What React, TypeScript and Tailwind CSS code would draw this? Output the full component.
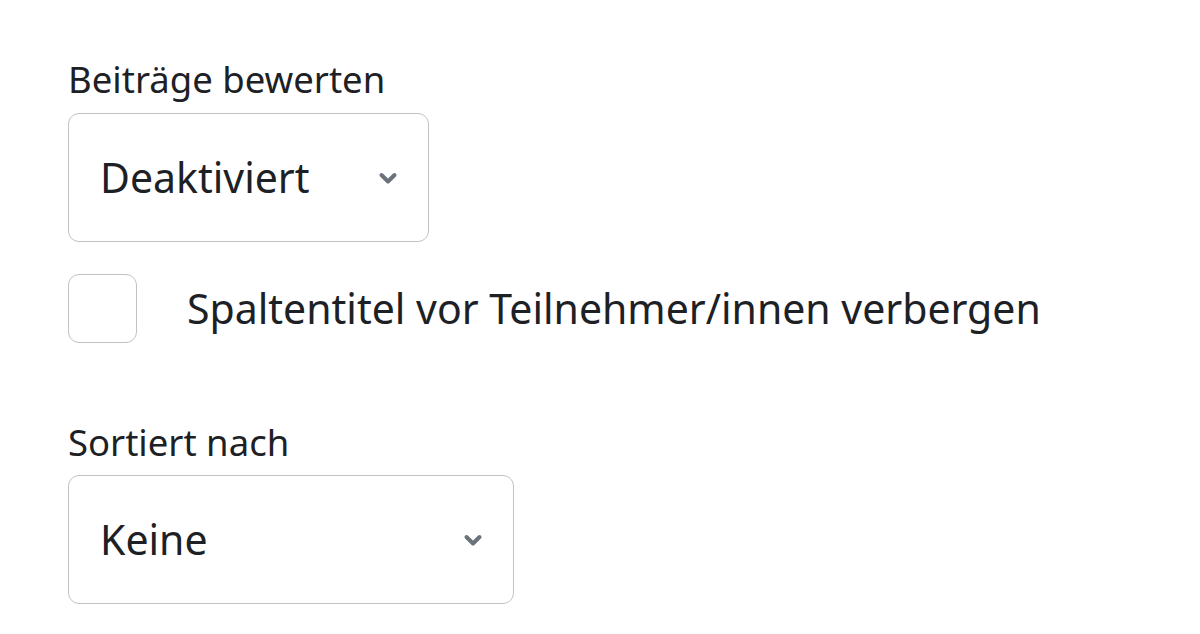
import { ReactNode } from 'react';

function Chevron() {
  return (
    <svg width="22" height="14" viewBox="0 0 22 14" className="shrink-0">
      <path d="M4.5 4 L11 10.5 L17.5 4" fill="none" stroke="#6a737b" strokeWidth="4" strokeLinecap="round" strokeLinejoin="round" />
    </svg>
  );
}

function Select({ value, width }: { value: string; width: string }) {
  return (
    <div className={`${width} h-[129px] border-[1.5px] border-[#bfc3c8] rounded-[11px] flex items-center justify-between pl-[31px] pr-[29px] bg-white`}>
      <span className="text-[41px] leading-none text-[#1d2125]">{value}</span>
      <Chevron />
    </div>
  );
}

function Label({ children }: { children: ReactNode }) {
  return <div className="text-[36.5px] leading-[36px] text-[#1d2125]">{children}</div>;
}

export default function App() {
  return (
    <div className="w-[1200px] h-[634px] bg-white pl-[68px] pt-[61px]" style={{ fontFamily: '"Noto Sans", "Open Sans", sans-serif' }}>
      <Label>Beiträge bewerten</Label>
      <div className="mt-[16px]">
        <Select value="Deaktiviert" width="w-[361px]" />
      </div>
      <div className="mt-[32px] flex items-center">
        <div className="w-[69px] h-[69px] border-[1.5px] border-[#bfc3c8] rounded-[11px] shrink-0" />
        <span className="ml-[50px] text-[41px] leading-none text-[#1d2125]">Spaltentitel vor Teilnehmer/innen verbergen</span>
      </div>
      <div className="mt-[81px]">
        <Label>Sortiert nach</Label>
      </div>
      <div className="mt-[15px]">
        <Select value="Keine" width="w-[446px]" />
      </div>
    </div>
  );
}
